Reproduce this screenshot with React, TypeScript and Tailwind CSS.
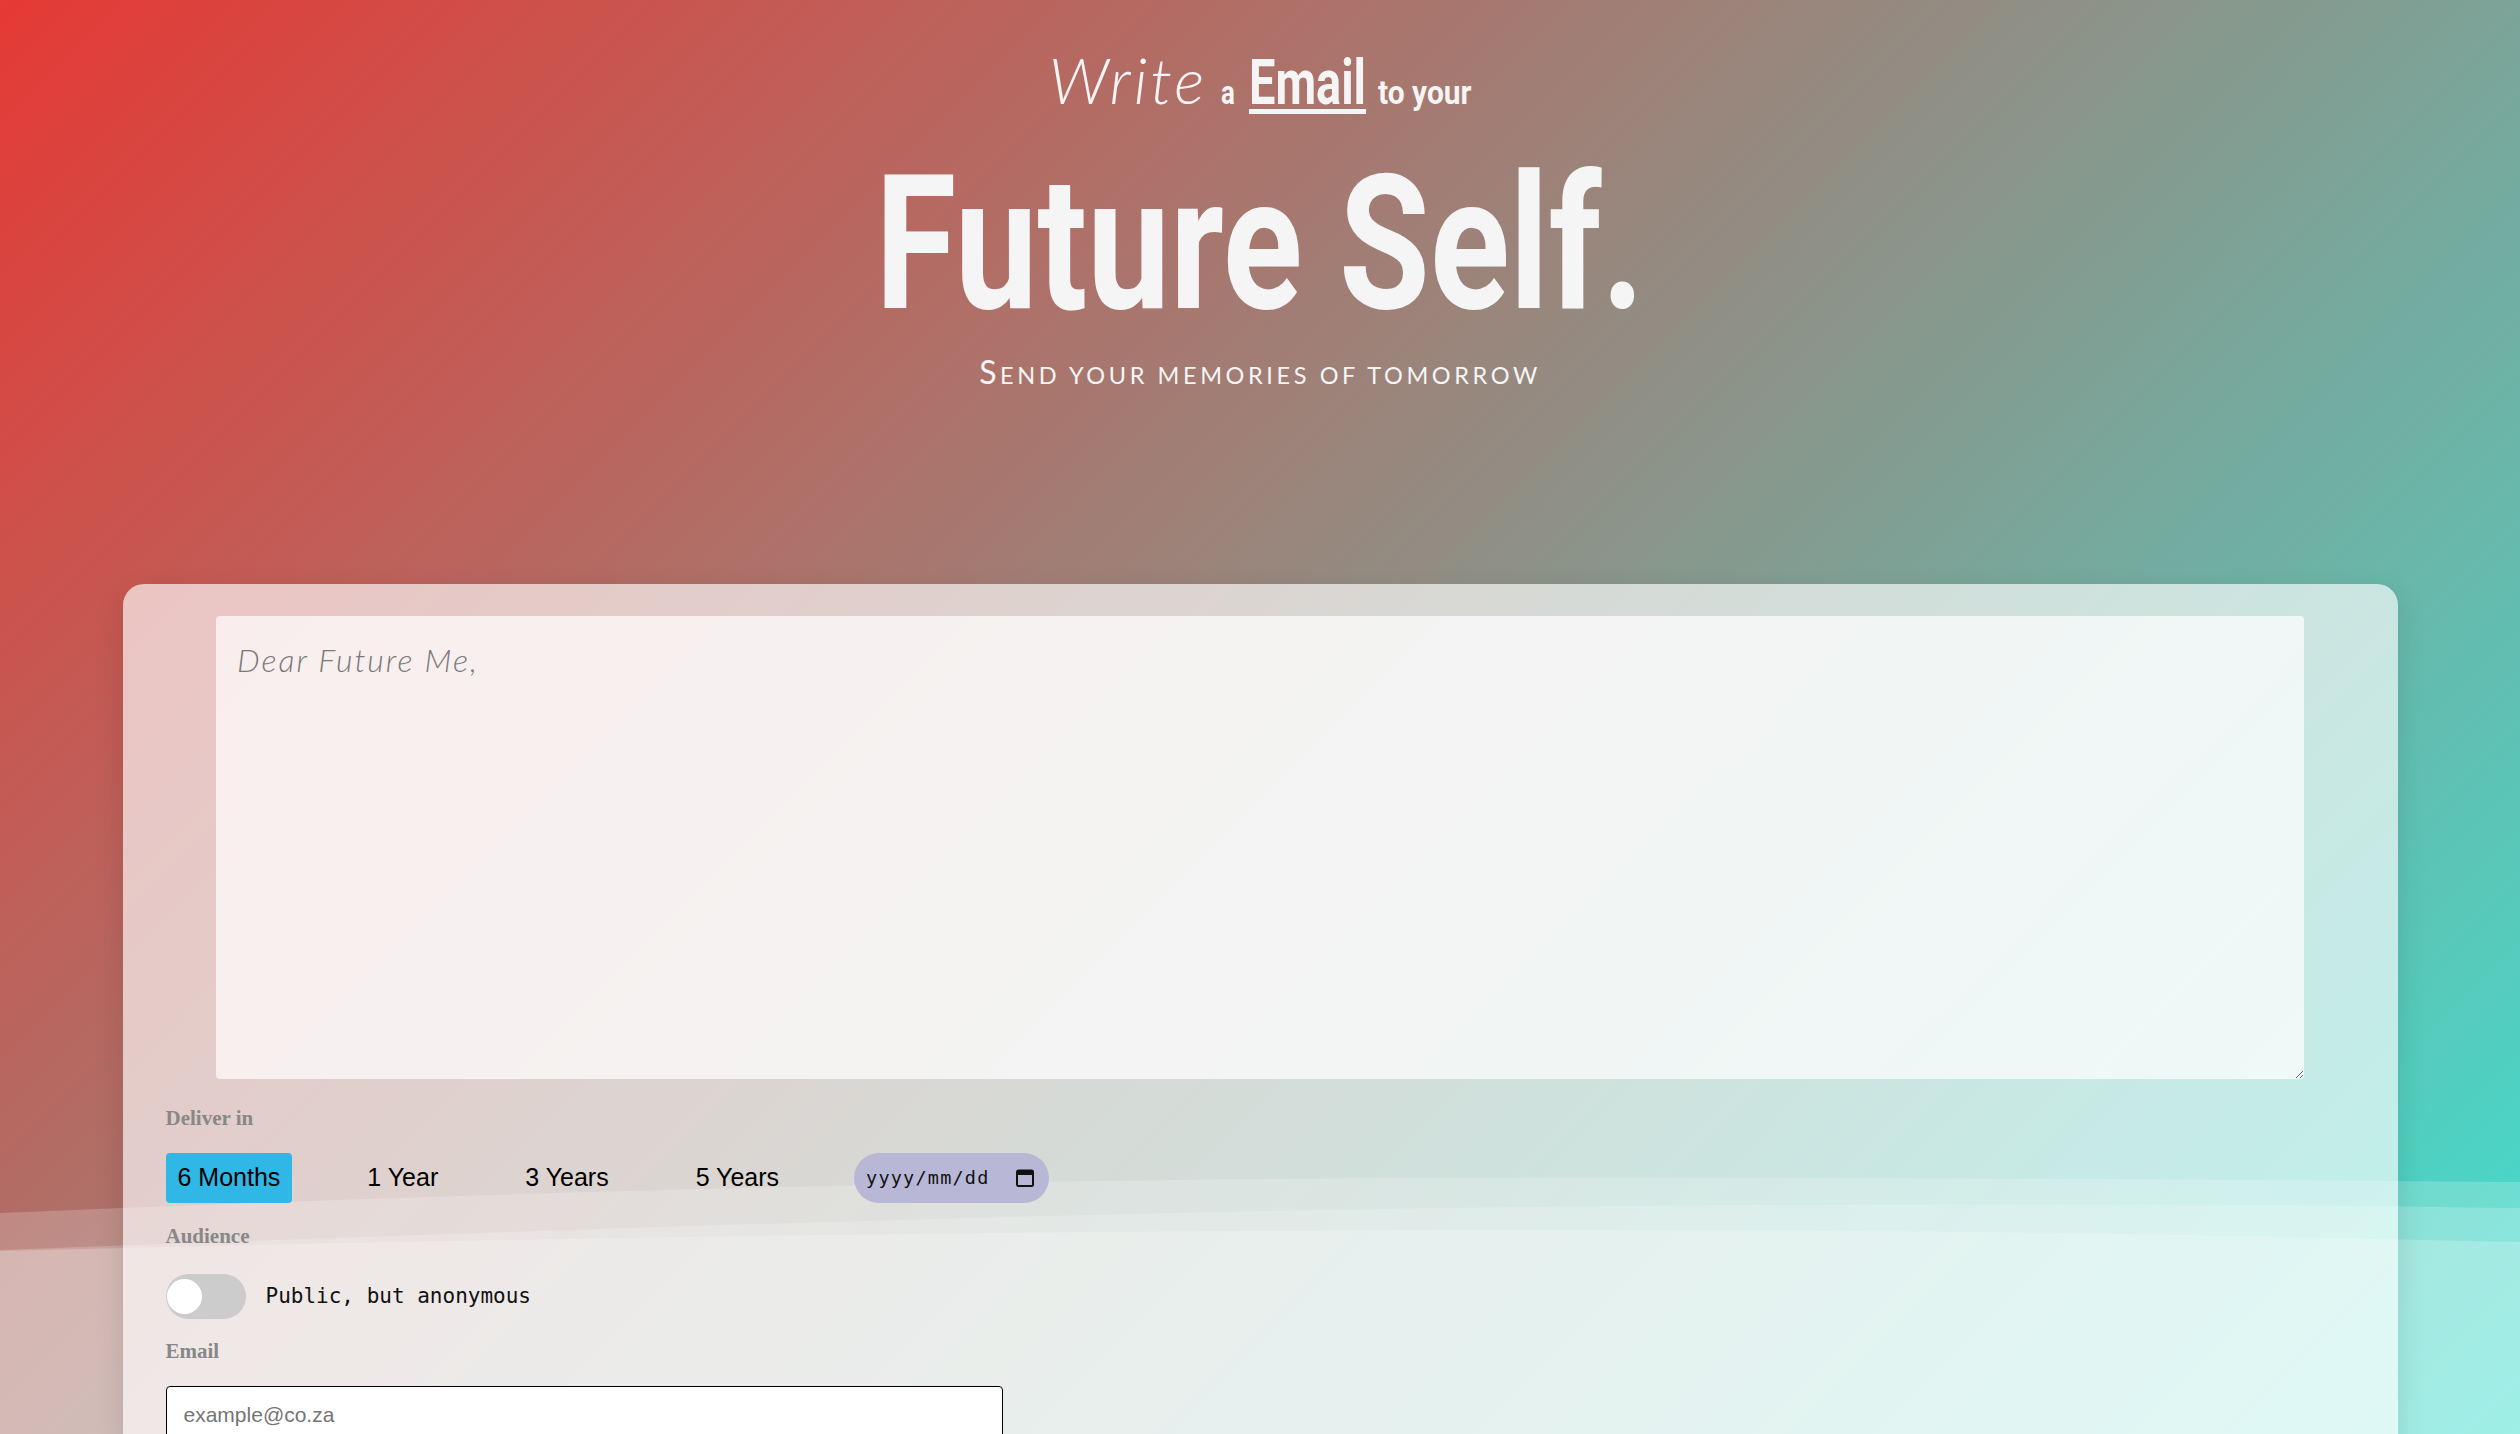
import React from "react";

const deliverOptions = ["6 Months", "1 Year", "3 Years", "5 Years"];

function CalendarIcon() {
  return (
    <svg width="18" height="18" viewBox="0 0 18 18" fill="none">
      <rect x="1" y="1.5" width="16" height="15.5" rx="1.5" stroke="#111" strokeWidth="2" />
      <rect x="1" y="1.5" width="16" height="4.5" fill="#111" />
    </svg>
  );
}

// soft translucent waves along the lower part of the page
function Waves() {
  return (
    <svg
      className="absolute left-0 top-[1150px] h-[284px] w-[2520px]"
      viewBox="0 0 2520 284"
      preserveAspectRatio="none"
    >
      <path
        d="M0,63 C500,42 1000,29 1450,28 S2300,30 2520,32 L2520,284 L0,284 Z"
        fill="#ffffff"
        fillOpacity="0.2"
      />
      <path
        d="M0,100 C600,78 1200,57 1768,55 S2400,57 2520,58 L2520,284 L0,284 Z"
        fill="#ffffff"
        fillOpacity="0.2"
      />
      <path
        d="M0,101 C500,88 1100,79 1608,80 S2300,88 2520,92 L2520,284 L0,284 Z"
        fill="#ffffff"
        fillOpacity="0.22"
      />
    </svg>
  );
}

export default function App() {
  return (
    <div className="relative h-[1434px] w-full overflow-hidden bg-[linear-gradient(135deg,#e53935,#40e0d0)]">
      <Waves />

      {/* Heading */}
      <header className="relative z-10 flex flex-col items-center pt-[48px] text-[#f5f5f5]">
        <div className="flex items-baseline leading-none whitespace-nowrap">
          <span className="mr-[14px] font-['Lato',sans-serif] text-[64px] font-light italic tracking-[3px]">Write</span>
          <span className="mr-[14px] inline-block w-[14px] font-['Roboto',sans-serif] text-[34px] font-bold">
            <span className="inline-block origin-left scale-x-[0.76]">a</span>
          </span>
          <span className="mr-[12px] inline-block w-[117px] font-['Roboto',sans-serif] text-[63px] font-bold">
            <span className="inline-block origin-left scale-x-[0.745] underline decoration-[5px] underline-offset-[5px]">
              Email
            </span>
          </span>
          <span className="inline-block w-[93px] font-['Roboto',sans-serif] text-[34px] font-bold">
            <span className="inline-block origin-left scale-x-[0.88]">to your</span>
          </span>
        </div>

        <h1 className="mt-[36px] font-['Roboto',sans-serif] text-[188px] font-bold leading-none whitespace-nowrap">
          <span className="inline-block scale-x-[0.785]">Future Self.</span>
        </h1>

        <p className="mt-[18px] flex items-baseline font-['Lato',sans-serif] leading-none tracking-[3.6px]">
          <span className="text-[32px]">S</span>
          <span className="text-[23.5px] uppercase">end your memories of tomorrow</span>
        </p>
      </header>

      {/* Letter card */}
      <main className="relative z-10 mx-auto mt-[196px] w-[2275px] rounded-t-[21px] bg-white/65 px-[43px] pt-[32px] pb-[60px] shadow-[0_10px_30px_rgba(0,0,0,0.12)]">
        <textarea
          placeholder="Dear Future Me,"
          className="mx-auto block h-[463px] w-[2088px] rounded-[4px] bg-white/70 px-[21px] py-[20px] font-['Lato',sans-serif] text-[32px] font-light italic tracking-[2px] text-[#333] outline-none placeholder:text-[#7a7a7a]"
        />

        <div className="mt-[29px] font-['Liberation_Serif',serif] text-[21px] font-bold leading-none text-[#888]">
          Deliver in
        </div>

        <div className="mt-[24px] flex h-[50px] items-center gap-[63px]">
          {deliverOptions.map((opt, i) => (
            <button
              key={opt}
              className={
                i === 0
                  ? "h-[50px] rounded-[4px] bg-[#2fb8e6] px-[12px] font-['Liberation_Sans',sans-serif] text-[25px] text-black"
                  : "h-[50px] rounded-[4px] px-[12px] font-['Liberation_Sans',sans-serif] text-[25px] text-black"
              }
            >
              {opt}
            </button>
          ))}
          <div className="flex h-[50px] w-[195px] items-center justify-between rounded-full bg-[#b8b8d6] pl-[12px] pr-[15px]">
            <span className="font-['DejaVu_Sans_Mono',monospace] text-[18.5px] tracking-[1.2px] text-[#111]">
              yyyy/mm/dd
            </span>
            <CalendarIcon />
          </div>
        </div>

        <div className="mt-[23px] font-['Liberation_Serif',serif] text-[21px] font-bold leading-none text-[#888]">
          Audience
        </div>

        <div className="mt-[27px] flex h-[45px] items-center gap-[20px]">
          <div className="relative h-[45px] w-[80px] rounded-full bg-[#cccccc]">
            <div className="absolute left-[1px] top-[5px] h-[35px] w-[35px] rounded-full bg-white" />
          </div>
          <span className="font-['DejaVu_Sans_Mono',monospace] text-[21px] text-[#111]">
            Public, but anonymous
          </span>
        </div>

        <div className="mt-[22px] font-['Liberation_Serif',serif] text-[21px] font-bold leading-none text-[#888]">
          Email
        </div>

        <input
          type="email"
          placeholder="example@co.za"
          className="mt-[24px] block h-[58px] w-[837px] rounded-[4px] border border-black bg-white px-[17px] font-['Liberation_Sans',sans-serif] text-[21px] outline-none placeholder:text-[#757575]"
        />
      </main>
    </div>
  );
}
